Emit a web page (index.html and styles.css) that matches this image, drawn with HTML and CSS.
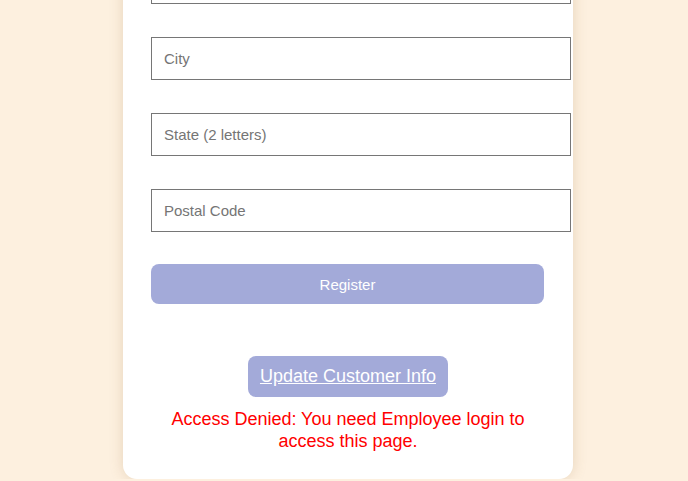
FILE: index.html
```html
<!DOCTYPE html>
<html lang="en">
<head>
<meta charset="utf-8">
<title>Register Customer</title>
<link rel="stylesheet" href="styles.css">
</head>
<body>
<div class="page">
  <div class="card">
    <form class="form">
      <input class="field" type="text" placeholder="Street Address">
      <input class="field" type="text" placeholder="City">
      <input class="field" type="text" placeholder="State (2 letters)">
      <input class="field" type="text" placeholder="Postal Code">
      <button class="register" type="button">Register</button>
    </form>
    <div class="actions">
      <a class="update" href="#">Update Customer Info</a>
      <p class="denied">Access Denied: You need Employee login to access this page.</p>
    </div>
  </div>
</div>
</body>
</html>
```

FILE: styles.css
```css
html, body {
  margin: 0;
  padding: 0;
  background: #fdf0df;
  font-family: "Liberation Sans", Arial, sans-serif;
  overflow: hidden;
}

.page {
  display: flex;
  justify-content: center;
  padding-left: 8px;
}

.card {
  width: 450px;
  box-sizing: border-box;
  margin-top: -67px;
  padding: 28px 28px 27px;
  background: #ffffff;
  border-radius: 14px;
  box-shadow: 0 0 14px rgba(150, 110, 60, 0.22);
}

.form {
  display: flex;
  flex-direction: column;
  align-items: flex-start;
}

.field {
  box-sizing: content-box;
  width: 100%;
  height: 17px;
  padding: 12px;
  margin: 0 0 33px;
  border: 1px solid #767676;
  border-radius: 0;
  font-family: "Liberation Sans", Arial, sans-serif;
  font-size: 15px;
  line-height: 17px;
  color: #222;
  background: #fff;
  outline: none;
}

.field::placeholder {
  color: #757575;
}

.field:nth-of-type(4) {
  margin-bottom: 32px;
}

.register {
  width: 393px;
  height: 40px;
  border: none;
  border-radius: 8px;
  background: #a3aad9;
  color: #ffffff;
  font-family: "Liberation Sans", Arial, sans-serif;
  font-size: 15px;
  cursor: pointer;
}

.actions {
  display: flex;
  flex-direction: column;
  align-items: center;
  margin-top: 52px;
}

.update {
  display: inline-block;
  padding: 10px 12px;
  border-radius: 8px;
  background: #a3aad9;
  color: #ffffff;
  font-size: 18px;
  line-height: 21px;
  text-decoration: underline;
}

.denied {
  margin: 11px 0 0;
  color: #ff0000;
  font-size: 18px;
  line-height: 22px;
  text-align: center;
}
```
